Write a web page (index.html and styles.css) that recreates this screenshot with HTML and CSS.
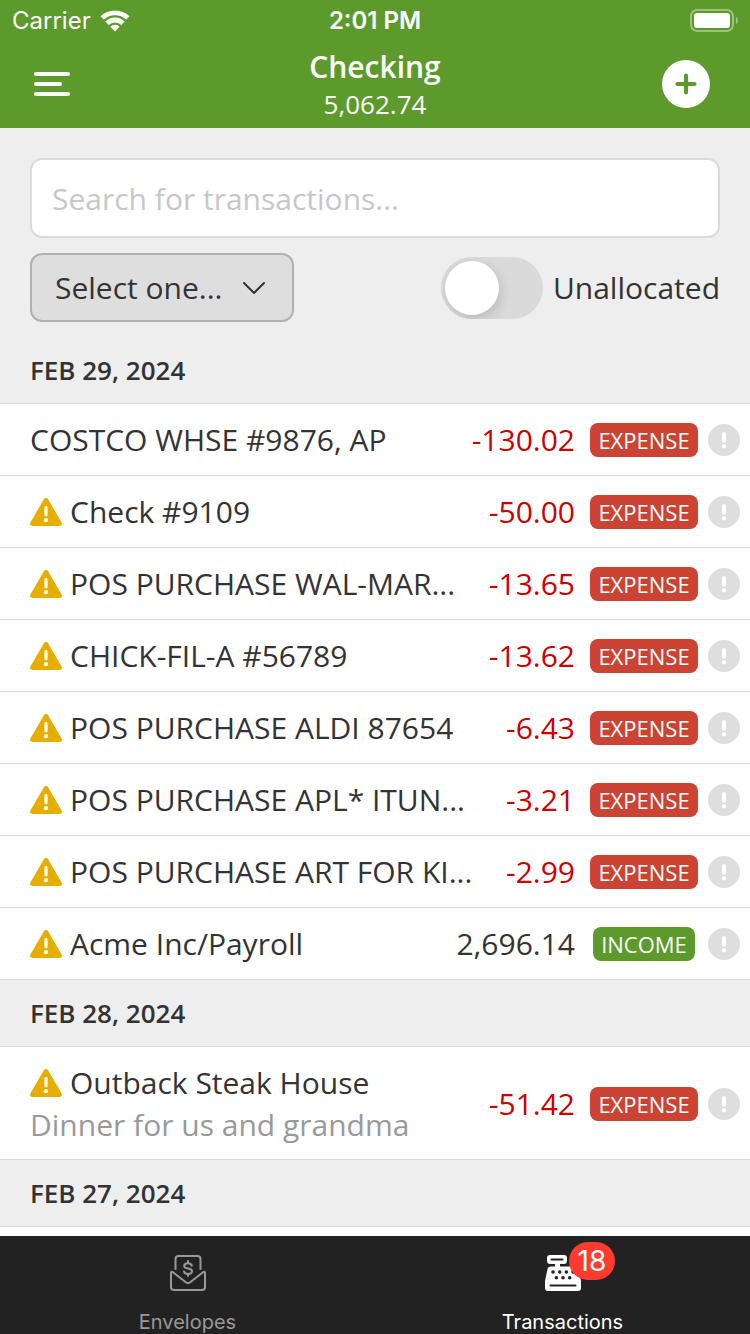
FILE: index.html
```html
<!DOCTYPE html>
<html lang="en">
<head>
    <meta charset="UTF-8">
    <meta name="viewport" content="width=device-width, initial-scale=1.0">
    <title>Checking</title>
    <link rel="stylesheet" href="styles.css">
</head>
<body>
    <!-- shared icons -->
    <svg class="sprite" aria-hidden="true">
        <symbol id="warning" viewBox="0 0 32 28">
            <path fill="#e6ae00" d="M13.9 1.3a2.4 2.4 0 0 1 4.2 0l13.5 23.1a2.4 2.4 0 0 1-2.1 3.6h-27a2.4 2.4 0 0 1-2.1-3.6z"/>
            <rect fill="#fff" x="14.4" y="8" width="3.2" height="10.4" rx="1.4"/>
            <circle fill="#fff" cx="16" cy="22.2" r="2.1"/>
        </symbol>
        <symbol id="info" viewBox="0 0 32 32">
            <circle fill="#dedede" cx="16" cy="16" r="16"/>
            <rect fill="#fff" x="14" y="8" width="4" height="11" rx="2"/>
            <circle fill="#fff" cx="16" cy="22.2" r="2.2"/>
        </symbol>
    </svg>

    <header class="header">
        <div class="status">
            <div class="carrier">
                <span>Carrier</span>
                <svg width="30" height="23" viewBox="0 0 30 23" fill="#fff">
                    <path d="M.5 7.200a21 21 0 0 1 29 0L26.200 10.600a16.500 16.500 0 0 0-22.400 0z"/>
                    <path d="M5.300 12.500a14 14 0 0 1 19.400 0L21.400 15.900a9.400 9.400 0 0 0-12.800 0z"/>
                    <path d="M10.300 17.700a6.800 6.800 0 0 1 9.400 0L15 22.500z"/>
                </svg>
            </div>
            <div class="time">2:01 PM</div>
            <svg class="battery" width="48" height="23" viewBox="0 0 48 23">
                <rect x="1" y="1" width="42" height="21" rx="6" fill="none" stroke="#fff" stroke-opacity=".4" stroke-width="2"/>
                <rect x="4" y="4" width="36" height="15" rx="3" fill="#fff"/>
                <path d="M46 8c2.400 1.300 2.400 5.700 0 7z" fill="#fff" fill-opacity=".45"/>
            </svg>
        </div>
        <div class="navbar">
            <button class="menu-button" aria-label="Menu">
                <svg width="36" height="24" viewBox="0 0 36 24" fill="#fff">
                    <rect width="36" height="4" rx="2"/>
                    <rect y="10" width="28" height="4" rx="2"/>
                    <rect y="20" width="36" height="4" rx="2"/>
                </svg>
            </button>
            <div class="account">
                <h1>Checking</h1>
                <div class="balance">5,062.74</div>
            </div>
            <button class="add-button" aria-label="Add transaction">
                <svg width="48" height="48" viewBox="0 0 48 48">
                    <circle cx="24" cy="24" r="24" fill="#fff"/>
                    <path d="M15.500 24h17M24 15.500v17" stroke="#5c9a2b" stroke-width="4.200" stroke-linecap="round"/>
                </svg>
            </button>
        </div>
    </header>

    <main class="content">
        <form class="filters">
            <input class="search" type="text" placeholder="Search for transactions..." aria-label="Search for transactions">
            <div class="filter-row">
                <div class="select">
                    <select aria-label="Filter">
                        <option>Select one...</option>
                    </select>
                    <svg width="24" height="14" viewBox="0 0 24 14" fill="none" stroke="#333" stroke-width="2" stroke-linecap="round" stroke-linejoin="round">
                        <path d="M2 2l10 10L22 2"/>
                    </svg>
                </div>
                <label class="toggle">
                    <input type="checkbox">
                    Unallocated
                </label>
            </div>
        </form>

        <h2 class="date">FEB 29, 2024</h2>
        <ul class="transactions">
            <li class="row">
                <div class="details">
                    <div class="payee"><span class="name">COSTCO WHSE #9876, AP</span></div>
                </div>
                <span class="amount negative">-130.02</span>
                <span class="type"><span class="badge expense">EXPENSE</span></span>
                <svg class="info"><use href="#info"/></svg>
            </li>
            <li class="row">
                <div class="details">
                    <div class="payee"><svg class="warning"><use href="#warning"/></svg><span class="name">Check #9109</span></div>
                </div>
                <span class="amount negative">-50.00</span>
                <span class="type"><span class="badge expense">EXPENSE</span></span>
                <svg class="info"><use href="#info"/></svg>
            </li>
            <li class="row">
                <div class="details">
                    <div class="payee"><svg class="warning"><use href="#warning"/></svg><span class="name">POS PURCHASE WAL-MAR...</span></div>
                </div>
                <span class="amount negative">-13.65</span>
                <span class="type"><span class="badge expense">EXPENSE</span></span>
                <svg class="info"><use href="#info"/></svg>
            </li>
            <li class="row">
                <div class="details">
                    <div class="payee"><svg class="warning"><use href="#warning"/></svg><span class="name">CHICK-FIL-A #56789</span></div>
                </div>
                <span class="amount negative">-13.62</span>
                <span class="type"><span class="badge expense">EXPENSE</span></span>
                <svg class="info"><use href="#info"/></svg>
            </li>
            <li class="row">
                <div class="details">
                    <div class="payee"><svg class="warning"><use href="#warning"/></svg><span class="name">POS PURCHASE ALDI 87654</span></div>
                </div>
                <span class="amount negative">-6.43</span>
                <span class="type"><span class="badge expense">EXPENSE</span></span>
                <svg class="info"><use href="#info"/></svg>
            </li>
            <li class="row">
                <div class="details">
                    <div class="payee"><svg class="warning"><use href="#warning"/></svg><span class="name">POS PURCHASE APL* ITUN...</span></div>
                </div>
                <span class="amount negative">-3.21</span>
                <span class="type"><span class="badge expense">EXPENSE</span></span>
                <svg class="info"><use href="#info"/></svg>
            </li>
            <li class="row">
                <div class="details">
                    <div class="payee"><svg class="warning"><use href="#warning"/></svg><span class="name">POS PURCHASE ART FOR KI...</span></div>
                </div>
                <span class="amount negative">-2.99</span>
                <span class="type"><span class="badge expense">EXPENSE</span></span>
                <svg class="info"><use href="#info"/></svg>
            </li>
            <li class="row">
                <div class="details">
                    <div class="payee"><svg class="warning"><use href="#warning"/></svg><span class="name">Acme Inc/Payroll</span></div>
                </div>
                <span class="amount">2,696.14</span>
                <span class="type"><span class="badge income">INCOME</span></span>
                <svg class="info"><use href="#info"/></svg>
            </li>
        </ul>

        <h2 class="date">FEB 28, 2024</h2>
        <ul class="transactions">
            <li class="row">
                <div class="details">
                    <div class="payee"><svg class="warning"><use href="#warning"/></svg><span class="name">Outback Steak House</span></div>
                    <div class="note">Dinner for us and grandma</div>
                </div>
                <span class="amount negative">-51.42</span>
                <span class="type"><span class="badge expense">EXPENSE</span></span>
                <svg class="info"><use href="#info"/></svg>
            </li>
        </ul>

        <h2 class="date">FEB 27, 2024</h2>
    </main>

    <nav class="tabbar">
        <a class="tab" href="#envelopes">
            <svg width="36" height="36" viewBox="0 0 36 36" fill="none" stroke="#999" stroke-width="2" stroke-linecap="round" stroke-linejoin="round">
                <path d="M5.500 14V4a3 3 0 0 1 3-3h19a3 3 0 0 1 3 3v10"/>
                <path d="M2.600 17L15.800 27.300a3.600 3.600 0 0 0 4.400 0L33.400 17c.9-.7 1.600-.2 1.600.8V32a3 3 0 0 1-3 3H4a3 3 0 0 1-3-3V17.800c0-1 .7-1.500 1.600-.8z"/>
                <path d="M18 6v2.200M18 18.800V21M21.800 10.600c-.5-1.600-2-2.400-3.800-2.400-2.200 0-3.800 1-3.800 2.700 0 3.800 7.800 1.600 7.800 5.300 0 1.700-1.700 2.700-4 2.700-2.100 0-3.600-.9-4-2.500"/>
            </svg>
            <span>Envelopes</span>
        </a>
        <a class="tab active" href="#transactions">
            <span class="tab-icon">
                <svg width="36" height="36" viewBox="0 0 36 36" fill="#fff">
                    <path d="M5 0h14a3 3 0 0 1 3 3v3a3 3 0 0 1-3 3h-4v2.500h15.500a3 3 0 0 1 3 2.500L36 26v7a3 3 0 0 1-3 3H3a3 3 0 0 1-3-3v-7l2.500-12a3 3 0 0 1 3-2.500H10V9H5a3 3 0 0 1-3-3V3a3 3 0 0 1 3-3z"/>
                    <path d="M6.500 4.500h11M5.500 30.500h25" stroke="#222" stroke-width="2" stroke-linecap="round"/>
                    <g fill="#222">
                        <circle cx="8" cy="17" r="1.800"/>
                        <circle cx="14.700" cy="17" r="1.800"/>
                        <circle cx="21.400" cy="17" r="1.800"/>
                        <circle cx="28" cy="17" r="1.800"/>
                        <circle cx="11.400" cy="22.700" r="1.800"/>
                        <circle cx="18" cy="22.700" r="1.800"/>
                        <circle cx="24.700" cy="22.700" r="1.800"/>
                    </g>
                </svg>
                <span class="count">18</span>
            </span>
            <span>Transactions</span>
        </a>
    </nav>
</body>
</html>
```
FILE: styles.css
```css
* {
    box-sizing: border-box;
}

body {
    display: flex;
    flex-direction: column;
    height: 100vh;
    margin: 0;
    overflow: hidden;
    background-color: #ffffff;
    color: #333;
    font-family: "Open Sans", sans-serif;
    font-size: 30px;
}

svg {
    display: block;
    flex: none;
}

button {
    padding: 0;
    border: none;
    background: none;
    cursor: pointer;
}

.sprite {
    display: none;
}

/* header */
.header {
    flex: none;
    background-color: #5c9a2b;
    color: #fff;
}

.status {
    display: grid;
    grid-template-columns: 1fr auto 1fr;
    align-items: center;
    height: 40px;
    padding: 0 12px;
    font-family: Inter, sans-serif;
    font-size: 24px;
}

.carrier {
    display: flex;
    align-items: center;
    gap: 9px;
}

.time {
    font-weight: 600;
}

.battery {
    justify-self: end;
}

.navbar {
    display: grid;
    grid-template-columns: 1fr auto 1fr;
    align-items: center;
    height: 88px;
    padding: 0 34px;
}

.menu-button {
    justify-self: start;
}

.add-button {
    justify-self: end;
    margin-right: 6px;
}

.account {
    text-align: center;
}

.account h1 {
    margin: 0;
    font-size: 30px;
    font-weight: 600;
    line-height: 40px;
}

.balance {
    font-size: 26px;
    line-height: 34px;
}

/* filters */
.content {
    flex: 1;
    min-height: 0;
    overflow: hidden;
}

.filters {
    padding: 30px 30px 15px;
    background-color: #eee;
}

.search {
    display: block;
    width: 100%;
    height: 80px;
    padding: 0 20px;
    border: 2px solid #dadada;
    border-radius: 12px;
    background-color: #fff;
    color: #333;
    font: inherit;
}

.search::placeholder {
    color: #c7c7c7;
}

.filter-row {
    display: flex;
    justify-content: space-between;
    align-items: center;
    margin-top: 15px;
}

.select {
    display: grid;
    align-items: center;
}

.select select,
.select svg {
    grid-area: 1 / 1;
}

.select select {
    appearance: none;
    width: 264px;
    height: 69px;
    padding: 0 60px 0 23px;
    border: 2px solid #b0b0b0;
    border-radius: 12px;
    background-color: #dedede;
    color: #333;
    font: inherit;
}

.select svg {
    justify-self: end;
    margin-right: 28px;
    pointer-events: none;
}

.toggle {
    display: flex;
    align-items: center;
    gap: 10px;
}

.toggle input {
    appearance: none;
    display: flex;
    width: 102px;
    height: 62px;
    margin: 0;
    padding: 4px;
    border-radius: 31px;
    background-color: #dadada;
    overflow: hidden;
}

.toggle input::before {
    content: "";
    width: 54px;
    height: 54px;
    border-radius: 50%;
    background-color: #fff;
    box-shadow: 2px 4px 12px rgba(0, 0, 0, 0.15);
}

.toggle input:checked {
    justify-content: flex-end;
    background-color: #5c9a2b;
}

/* transactions */
.date {
    margin: 0;
    padding: 15px 30px;
    border-bottom: 1px solid #dadada;
    background-color: #eee;
    font-size: 26px;
    font-weight: 600;
    line-height: 36px;
}

.transactions {
    margin: 0;
    padding: 0;
    list-style: none;
}

.row {
    display: flex;
    align-items: center;
    padding: 15px 10px 14px 30px;
    border-bottom: 1px solid #dadada;
}

.details {
    flex: 1;
    min-width: 0;
}

.payee {
    display: flex;
    align-items: center;
    gap: 8px;
    line-height: 42px;
}

.name {
    overflow: hidden;
    text-overflow: ellipsis;
    white-space: nowrap;
}

.warning {
    width: 32px;
    height: 28px;
}

.note {
    color: #999;
    line-height: 41px;
}

.amount {
    margin-left: 15px;
    line-height: 42px;
}

.negative {
    color: #c00;
}

.type {
    display: flex;
    justify-content: center;
    width: 108px;
    margin: 0 10px 0 15px;
}

.badge {
    padding: 0 8px;
    border-radius: 8px;
    color: #fff;
    font-size: 22px;
    line-height: 34px;
}

.expense {
    background-color: #cb4332;
}

.income {
    background-color: #5c9a2b;
}

.info {
    width: 32px;
    height: 32px;
}

/* tab bar */
.tabbar {
    display: flex;
    flex: none;
    height: 98px;
    background-color: #222;
    font-family: Inter, sans-serif;
    font-size: 20px;
}

.tab {
    display: flex;
    flex: 1;
    flex-direction: column;
    align-items: center;
    gap: 18px;
    padding-top: 19px;
    color: #999;
    line-height: 26px;
    text-decoration: none;
}

.active {
    color: #fff;
}

.tab-icon {
    position: relative;
}

.count {
    position: absolute;
    top: -13px;
    left: 24px;
    padding: 0 9px;
    border-radius: 19px;
    background-color: #ff3b30;
    font-size: 28px;
    line-height: 38px;
}
```
